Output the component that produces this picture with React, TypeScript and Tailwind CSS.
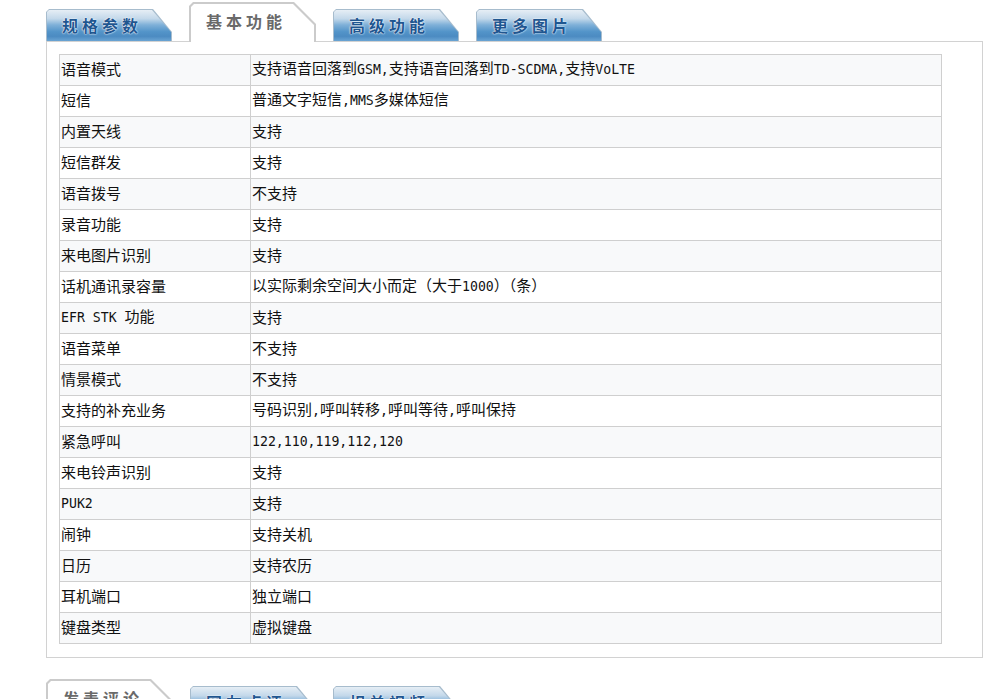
// Phone spec tabs — "基本功能" panel with a two-column attribute table.

const specs: [string, string][] = [
  ['语音模式', '支持语音回落到GSM,支持语音回落到TD-SCDMA,支持VoLTE'],
  ['短信', '普通文字短信,MMS多媒体短信'],
  ['内置天线', '支持'],
  ['短信群发', '支持'],
  ['语音拨号', '不支持'],
  ['录音功能', '支持'],
  ['来电图片识别', '支持'],
  ['话机通讯录容量', '以实际剩余空间大小而定（大于1000）（条）'],
  ['EFR STK 功能', '支持'],
  ['语音菜单', '不支持'],
  ['情景模式', '不支持'],
  ['支持的补充业务', '号码识别,呼叫转移,呼叫等待,呼叫保持'],
  ['紧急呼叫', '122,110,119,112,120'],
  ['来电铃声识别', '支持'],
  ['PUK2', '支持'],
  ['闹钟', '支持关机'],
  ['日历', '支持农历'],
  ['耳机端口', '独立端口'],
  ['键盘类型', '虚拟键盘'],
];

// SimSun-style mixed text: ascii runs are half width, CJK full width
function Mixed({ text }: { text: string }) {
  const parts = text.split(/([\x20-\x7E]+)/).filter(Boolean);
  return (
    <>
      {parts.map((p, i) =>
        /^[\x20-\x7E]+$/.test(p) ? (
          <span key={i} className="text-[13.2px] font-['DejaVu_Sans_Mono',monospace] whitespace-pre">
            {p}
          </span>
        ) : (
          <span key={i}>{p}</span>
        ),
      )}
    </>
  );
}

function BlueTab({ label }: { label: string }) {
  return (
    <div className="h-[32px] w-[126px] bg-[#a7bccd] px-px pt-px [clip-path:polygon(0_3px,3px_0,107px_0,126px_23px,126px_100%,0_100%)]">
      <div className="flex h-full items-center bg-[linear-gradient(to_bottom,#e6eef5_0%,#c3d8ea_28%,#7fb0d8_48%,#5394c9_70%,#4c8bc2_85%,#6aa4d3_100%)] pb-[2px] pl-[15px] [clip-path:polygon(0_2px,2px_0,105px_0,124px_22px,124px_100%,0_100%)]">
        <span className="text-[16px] font-semibold tracking-[4px] text-[#1f5690] [text-shadow:0_0_2px_#ffffff,0_0_1px_#ffffff] font-['Noto_Sans_CJK_SC',sans-serif]">
          {label}
        </span>
      </div>
    </div>
  );
}

function ActiveTab({ label }: { label: string }) {
  return (
    <div className="relative z-10 -mb-px h-[40px] w-[127px] bg-[#cbcbcb] px-[2px] pt-[2px] [clip-path:polygon(0_4px,4px_0,105px_0,127px_22px,127px_100%,0_100%)]">
      <div className="flex h-full items-start bg-white pl-[15px] pt-[5px] [clip-path:polygon(0_3px,3px_0,102px_0,123px_21px,123px_100%,0_100%)]">
        <span className="text-[16px] font-semibold tracking-[4px] text-[#6a6a6a] font-['Noto_Sans_CJK_SC',sans-serif]">
          {label}
        </span>
      </div>
    </div>
  );
}

function TabRow({ tabs, active }: { tabs: string[]; active: number }) {
  return (
    <div className="flex h-[41px] items-end gap-[17px]">
      {tabs.map((t, i) => (i === active ? <ActiveTab key={t} label={t} /> : <BlueTab key={t} label={t} />))}
    </div>
  );
}

export default function App() {
  return (
    <div className="min-h-screen bg-white pl-[46px] text-[15px] text-[#111] font-['Noto_Sans_CJK_SC',sans-serif]">
      <TabRow tabs={['规格参数', '基本功能', '高级功能', '更多图片']} active={1} />

      <div className="w-[937px] border border-[#d2d2d2] bg-white pb-[13px] pl-[12px] pt-[12px]">
        <table className="w-[883px] border-collapse">
          <tbody>
            {specs.map(([k, v], i) => (
              <tr key={k} className={i % 2 === 0 ? 'bg-[#f8f9fa]' : 'bg-white'}>
                <td className="h-[31px] w-[191px] border border-[#cfcfcf] pb-[4px] pl-[1px] align-middle leading-none">
                  <Mixed text={k} />
                </td>
                <td className="h-[31px] border border-[#cfcfcf] pb-[4px] pl-[1px] align-middle leading-none">
                  <Mixed text={v} />
                </td>
              </tr>
            ))}
          </tbody>
        </table>
      </div>

      <div className="mt-[19px]">
        <TabRow tabs={['发表评论', '网友点评', '相关视频']} active={0} />
      </div>
      <div className="h-[60px]" />
    </div>
  );
}
